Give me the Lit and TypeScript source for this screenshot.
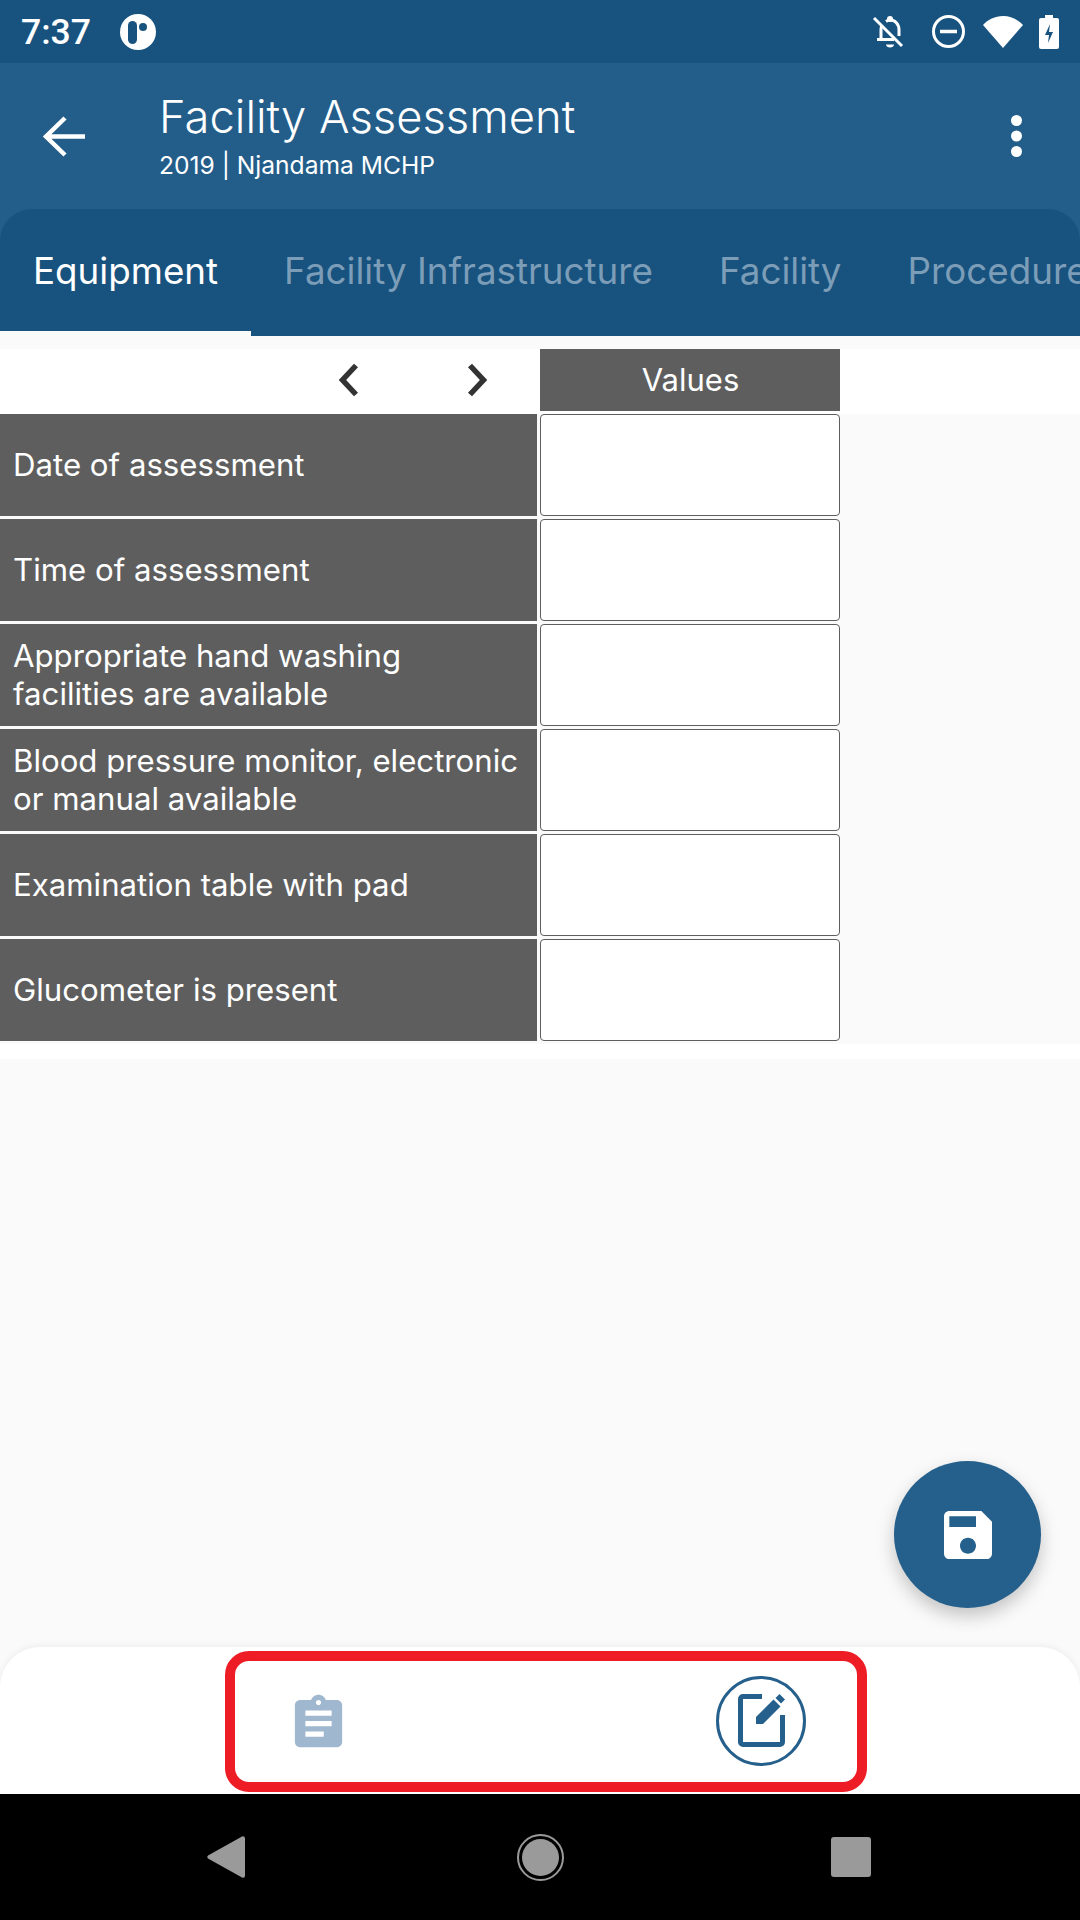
import { LitElement, css, html } from "lit";
import { customElement } from "lit/decorators.js";

const ROWS = [
  "Date of assessment",
  "Time of assessment",
  "Appropriate hand washing facilities are available",
  "Blood pressure monitor, electronic or manual available",
  "Examination table with pad",
  "Glucometer is present",
];

const TABS = ["Equipment", "Facility Infrastructure", "Facility", "Procedure"];

@customElement("app-root")
export class AppRoot extends LitElement {
  static styles = css`
    :host {
      display: flex;
      flex-direction: column;
      position: relative;
      width: 1080px;
      height: 1920px;
      overflow: hidden;
      background: #fafafa;
      font-family: Inter, "Liberation Sans", sans-serif;
      color: #fff;
    }

    svg {
      display: block;
      flex: none;
      overflow: visible;
    }

    .status {
      height: 63px;
      flex: none;
      display: flex;
      align-items: center;
      background: #18537f;
      padding: 0 21px;
    }

    .time {
      font: 500 35.5px Roboto, sans-serif;
      width: 99px;
    }

    .status-icons {
      margin-left: auto;
      display: flex;
      align-items: center;
    }

    .toolbar {
      height: 146px;
      flex: none;
      display: flex;
      align-items: center;
      background: #235d8a;
      padding: 0 58px 0 43px;
    }

    .titles {
      margin-left: 74px;
      padding-bottom: 3px;
      flex: 1;
    }

    .title {
      font-size: 45.3px;
      font-weight: 300;
      line-height: 54px;
      margin-bottom: 6px;
    }

    .sub {
      font-size: 24.6px;
      line-height: 30px;
    }

    .tabs-bg {
      background: #235d8a;
      flex: none;
    }

    .tabs {
      height: 127px;
      display: flex;
      background: #18527e;
      border-radius: 32px 32px 0 0;
      overflow: hidden;
    }

    .tab {
      flex: none;
      display: flex;
      align-items: center;
      padding: 0 33px 4px;
      font-size: 36.75px;
      color: #7c9db8;
      box-sizing: border-box;
      height: 127px;
    }

    .tab.active {
      color: #fff;
      position: relative;
    }

    .tab.active::after {
      content: "";
      position: absolute;
      left: 0;
      right: 0;
      bottom: 0;
      height: 5px;
      background: #fafafa;
    }

    .table {
      margin-top: 13px;
      background: #fff;
      flex: none;
      padding-bottom: 3px;
    }

    .head {
      display: flex;
      height: 65px;
    }

    .nav {
      width: 540px;
      height: 62px;
      display: flex;
      align-items: center;
      padding-left: 339px;
      gap: 108px;
      box-sizing: border-box;
    }

    .values {
      width: 300px;
      height: 62px;
      background: #5e5e5e;
      display: flex;
      align-items: center;
      justify-content: center;
      font-size: 31px;
      padding: 0 0 2px 1px;
      box-sizing: border-box;
    }

    .grid {
      background: #fafafa;
      display: flex;
      flex-direction: column;
      gap: 3px;
      padding-bottom: 3px;
    }

    .row {
      display: flex;
      gap: 3px;
      height: 102px;
    }

    .label {
      width: 537px;
      flex: none;
      background: #5e5e5e;
      display: flex;
      align-items: center;
      padding: 0 13px 1px;
      box-sizing: border-box;
      font-size: 31.2px;
      line-height: 38px;
    }

    .input {
      width: 300px;
      box-sizing: border-box;
      background: #fff;
      border: 1px solid #5e5e5e;
      border-radius: 4px;
    }

    .white-gap {
      height: 12px;
      background: #fff;
      flex: none;
    }

    .fab {
      position: absolute;
      left: 894px;
      top: 1461px;
      width: 147px;
      height: 147px;
      border-radius: 50%;
      background: #25608c;
      box-shadow: 0 8px 18px rgba(0, 0, 0, 0.22);
      display: flex;
      align-items: center;
      justify-content: center;
    }

    .bottom {
      margin-top: auto;
      height: 147px;
      flex: none;
      background: #fff;
      border-radius: 40px 40px 0 0;
      box-shadow: 0 -2px 6px rgba(0, 0, 0, 0.05);
      position: relative;
      display: flex;
      align-items: center;
      padding-left: 287px;
      box-sizing: border-box;
    }

    .clipboard {
      margin-top: 5px;
    }

    .edit {
      margin-left: 366px;
      width: 90px;
      height: 90px;
      box-sizing: border-box;
      border: 3px solid #25608c;
      border-radius: 50%;
      display: flex;
      align-items: center;
      justify-content: center;
    }

    .highlight {
      position: absolute;
      left: 225px;
      top: 4px;
      width: 642px;
      height: 141px;
      box-sizing: border-box;
      border: 10px solid #ee1c25;
      border-radius: 24px;
    }

    .sysnav {
      height: 126px;
      flex: none;
      background: #000;
      display: flex;
      align-items: center;
      padding-left: 207px;
    }

    .home {
      margin-left: 272px;
      width: 47px;
      height: 47px;
      box-sizing: border-box;
      border: 2px solid #9a9a9a;
      border-radius: 50%;
      padding: 3px;
    }

    .home div {
      width: 100%;
      height: 100%;
      border-radius: 50%;
      background: #9a9a9a;
    }

    .square {
      margin-left: 267px;
      width: 40px;
      height: 40px;
      border-radius: 3px;
      background: #9a9a9a;
    }
  `;

  render() {
    return html`
      <div class="status">
        <span class="time">7:37</span>
        <svg width="36" height="36" viewBox="0 0 36 36">
          <circle cx="18" cy="18" r="18" fill="#fff" />
          <rect x="8" y="7" width="9" height="23" rx="4.500" fill="#18537f" />
          <circle cx="23" cy="13" r="4" fill="#18537f" />
        </svg>
        <div class="status-icons">
          <svg width="32" height="32" viewBox="0 0 32 32" fill="none" stroke="#fff" stroke-width="3">
            <path d="M9 22V13c0-1.500.4-3 1.200-4.200M14 5.400c1.300-.9 2.700-1.400 4-1.400 5 0 9 4 9 10v6" />
            <path d="M5 23.500h17" />
            <path d="M2 2l28 28" />
            <path d="M14 28.500c0 2 2 3 4 3s4-1 4-3z" fill="#fff" stroke="none" />
            <circle cx="18" cy="3" r="3" fill="#fff" stroke="none" />
          </svg>
          <svg style="margin-left:28px" width="33" height="33" viewBox="0 0 33 33" fill="none" stroke="#fff" stroke-width="3">
            <circle cx="16.500" cy="16.500" r="15" />
            <path d="M8 16.500h17" stroke-width="3.500" />
          </svg>
          <svg style="margin-left:18px" width="40" height="32" viewBox="0 0 40 32">
            <path d="M0 9C5 3.500 12 0 20 0s15 3.500 20 9L20 32z" fill="#fff" />
          </svg>
          <svg style="margin-left:16px" width="20" height="34" viewBox="0 0 20 34">
            <path d="M6 0h8v3h4a2 2 0 0 1 2 2v27a2 2 0 0 1-2 2H2a2 2 0 0 1-2-2V5a2 2 0 0 1 2-2h4z" fill="#fff" />
            <path d="M11 9l-5 11h4l-1 8 5-11h-4z" fill="#18537f" />
          </svg>
        </div>
      </div>

      <div class="toolbar">
        <svg width="42" height="41" viewBox="0 0 42 41" fill="none" stroke="#fff" stroke-width="4.500">
          <path d="M42 20.500H3M22 2L3 20.500 22 39" />
        </svg>
        <div class="titles">
          <div class="title">Facility Assessment</div>
          <div class="sub">2019 | Njandama MCHP</div>
        </div>
        <svg width="11" height="42" viewBox="0 0 11 42" fill="#fff">
          <circle cx="5.500" cy="5.500" r="5.500" />
          <circle cx="5.500" cy="21" r="5.500" />
          <circle cx="5.500" cy="36.500" r="5.500" />
        </svg>
      </div>

      <div class="tabs-bg">
        <div class="tabs">
          ${TABS.map((t, i) => html`<div class="tab ${i === 0 ? "active" : ""}">${t}</div>`)}
        </div>
      </div>

      <div class="table">
        <div class="head">
          <div class="nav">
            <svg width="20" height="34" viewBox="0 0 20 34" fill="none" stroke="#333" stroke-width="5.500">
              <path d="M17 2.500L3.500 17 17 31.500" />
            </svg>
            <svg width="20" height="34" viewBox="0 0 20 34" fill="none" stroke="#333" stroke-width="5.500">
              <path d="M3 2.500L16.500 17 3 31.500" />
            </svg>
          </div>
          <div class="values">Values</div>
        </div>
        <div class="grid">
          ${ROWS.map(
            (r) => html`<div class="row">
              <div class="label">${r}</div>
              <div class="input"></div>
            </div>`
          )}
        </div>
      </div>
      <div class="white-gap"></div>

      <div class="fab">
        <svg width="64" height="64" viewBox="0 0 24 24" fill="#fff">
          <path d="M17 3H5c-1.110 0-2 .9-2 2v14c0 1.100.89 2 2 2h14c1.100 0 2-.9 2-2V7l-4-4zm-5 16c-1.660 0-3-1.340-3-3s1.340-3 3-3 3 1.340 3 3-1.340 3-3 3zm3-10H5V5h10v4z" />
        </svg>
      </div>

      <div class="bottom">
        <svg class="clipboard" width="63" height="63" viewBox="0 0 24 24" fill="#9fb8cf">
          <path d="M19 3h-4.180C14.400 1.840 13.300 1 12 1c-1.300 0-2.400.84-2.820 2H5c-1.100 0-2 .9-2 2v14c0 1.100.9 2 2 2h14c1.100 0 2-.9 2-2V5c0-1.100-.9-2-2-2zm-7 0c.55 0 1 .45 1 1s-.45 1-1 1-1-.45-1-1 .45-1 1-1zm2 14H7v-2h7v2zm3-4H7v-2h10v2zm0-4H7V7h10v2z" />
        </svg>
        <div class="edit">
          <svg width="47" height="53" viewBox="0 0 47 53" fill="none">
            <path d="M24 2.500H5A2.500 2.500 0 0 0 2.500 5v43A2.500 2.500 0 0 0 5 50.500h37a2.500 2.500 0 0 0 2.500-2.500V21" stroke="#25608c" stroke-width="5" />
            <path d="M18 23L35.500 5.500l7 7L25 30h-7z" fill="#25608c" />
            <path d="M37.500 4l4-4L47 5.500l-4 4z" fill="#25608c" />
          </svg>
        </div>
        <div class="highlight"></div>
      </div>

      <div class="sysnav">
        <svg width="38" height="42" viewBox="0 0 38 42">
          <path d="M1 22.500a2 2 0 0 1 0-3L35 .5a2 2 0 0 1 3 1.500v38a2 2 0 0 1-3 1.500z" fill="#9a9a9a" />
        </svg>
        <div class="home"><div></div></div>
        <div class="square"></div>
      </div>
    `;
  }
}
